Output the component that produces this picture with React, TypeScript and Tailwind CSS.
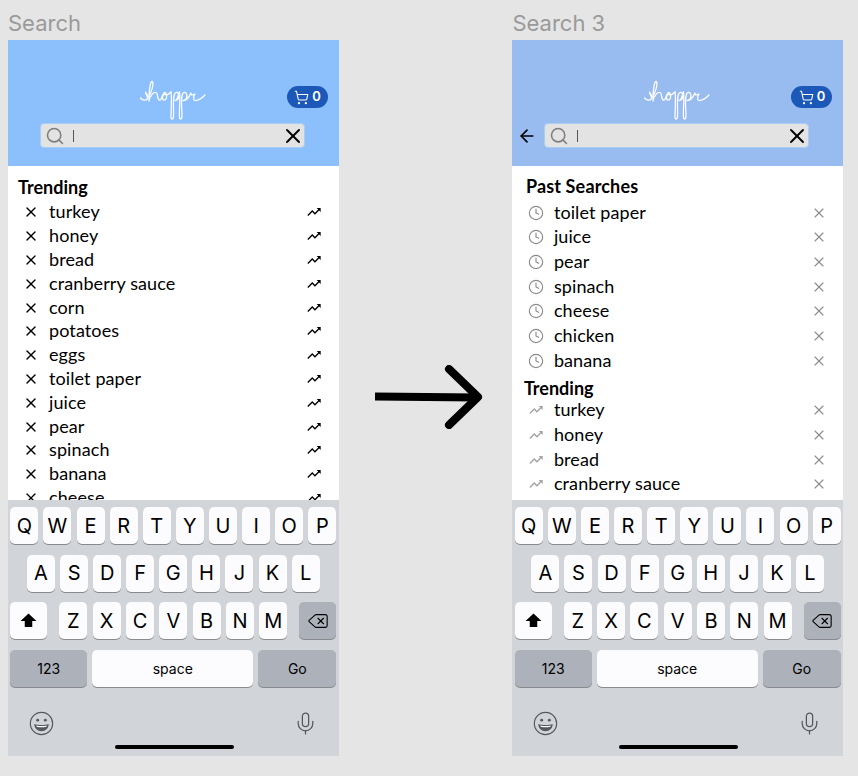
import { ArrowLeft, Clock, Delete, Mic, Search, ShoppingCart, X } from 'lucide-react';

const row1 = ['Q', 'W', 'E', 'R', 'T', 'Y', 'U', 'I', 'O', 'P'];
const row2 = ['A', 'S', 'D', 'F', 'G', 'H', 'J', 'K', 'L'];
const row3 = ['Z', 'X', 'C', 'V', 'B', 'N', 'M'];

const trendingAll = [
  'turkey',
  'honey',
  'bread',
  'cranberry sauce',
  'corn',
  'potatoes',
  'eggs',
  'toilet paper',
  'juice',
  'pear',
  'spinach',
  'banana',
  'cheese',
];
const pastSearches = ['toilet paper', 'juice', 'pear', 'spinach', 'cheese', 'chicken', 'banana'];

function TrendIcon({ className }: { className: string }) {
  return (
    <svg viewBox="0 0 24 24" className={className} fill="currentColor">
      <path d="M16 6l2.29 2.29-4.88 4.88-4-4L2 16.59 3.41 18l6-6 4 4 6.3-6.29L22 12V6z" />
    </svg>
  );
}

function Logo() {
  return (
    <svg viewBox="0 0 67 40" role="img" aria-label="shoppr" className="h-10 w-[67px]" fill="none" stroke="white" strokeWidth="1.25" strokeLinecap="round" strokeLinejoin="round">
      <path d="M0.5 18 C3 21 8 21 7.5 17 C7 15 5.5 14 5.5 12 C7 14 7.5 17 9 16 C11 13 14 5 12.5 1.5 C11 0 9 6 9 21 C10 16 13 12 16 12.5 C19 14 16 20 20 20 C22 20 22 14 24.5 12.5 C27.5 12 27.5 20 24 20 C22 20 22 16 24 14 C26 16 28 15 31 12" />
      <path d="M31 12 C32 18 31 30 31 37 C31 40 33.5 40 33.5 36 C34 28 32 14 36 12.5 C40 12 40 20 35 20.5 C37 21 38 16 39.5 12" />
      <path d="M39.5 12 C40.5 18 39 30 39.5 37 C39.5 40 42 40 42 36 C42 28 40 14 44 12.5 C48 12 48 20 43 20.5 C47 21 49 17 51 13 C51 16 52 15 55 14 C53 17 53 21 56 20.5 C59 20 62 18 65 15" />
    </svg>
  );
}

function Key({ label }: { label: string }) {
  return (
    <div className="flex h-[37px] w-[28px] items-center justify-center rounded-[5px] bg-[#fcfcfe] text-[20px] text-black shadow-[0_1px_0_#898a8d]">
      {label}
    </div>
  );
}

function Keyboard() {
  return (
    <div className="flex h-[256px] flex-col bg-[#d1d4d9] font-['Inter',sans-serif]">
      <div className="flex flex-col gap-[10.5px] pl-[2.3px] pr-[2.3px] pt-[7px]">
        <div className="flex justify-between">
          {row1.map((k) => (
            <Key key={k} label={k} />
          ))}
        </div>
        <div className="flex justify-between px-[16.7px]">
          {row2.map((k) => (
            <Key key={k} label={k} />
          ))}
        </div>
        <div className="flex items-center justify-between">
          <div className="flex h-[37px] w-[37px] items-center justify-center rounded-[5px] bg-[#fcfcfe] shadow-[0_1px_0_#898a8d]">
            <svg viewBox="0 0 18 16" className="h-[15px] w-[17px]" fill="black">
              <path d="M9 0.5 L17.5 8.5 L13 8.5 L13 15 L5 15 L5 8.5 L0.5 8.5 Z" />
            </svg>
          </div>
          <div className="flex w-[228px] justify-between">
            {row3.map((k) => (
              <Key key={k} label={k} />
            ))}
          </div>
          <div className="flex h-[37px] w-[37px] items-center justify-center rounded-[5px] bg-[#acb1ba] text-black shadow-[0_1px_0_#898a8d]">
            <Delete className="h-[22px] w-[22px]" strokeWidth={1.2} />
          </div>
        </div>
        <div className="flex justify-between">
          <div className="flex h-[37px] w-[77px] items-center justify-center rounded-[5px] bg-[#acb1ba] text-[14px] text-black shadow-[0_1px_0_#898a8d]">
            123
          </div>
          <div className="flex h-[37px] w-[161px] items-center justify-center rounded-[5px] bg-[#fcfcfe] text-[14px] text-black shadow-[0_1px_0_#898a8d]">
            space
          </div>
          <div className="flex h-[37px] w-[78px] items-center justify-center rounded-[5px] bg-[#acb1ba] text-[14px] text-black shadow-[0_1px_0_#898a8d]">
            Go
          </div>
        </div>
      </div>
      <div className="flex items-center justify-between pl-[21px] pr-[21px] pt-[24px]">
        <svg viewBox="0 0 26 26" className="h-[25px] w-[25px]" fill="none" stroke="#55585e" strokeWidth="1.2">
          <circle cx="13" cy="13" r="11.6" />
          <circle cx="9" cy="9.5" r="1.5" fill="#55585e" stroke="none" />
          <circle cx="17" cy="9.5" r="1.5" fill="#55585e" stroke="none" />
          <path d="M5.5 13.5 C9 15 17 15 20.5 13.5 C20.5 18 17 21 13 21 C9 21 5.5 18 5.5 13.5 Z" fill="#55585e" stroke="none" />
          <path d="M7.5 15 C10.5 15.8 15.5 15.8 18.5 15 L18 16.5 C15 17.2 11 17.2 8 16.5 Z" fill="white" stroke="none" />
        </svg>
        <Mic className="h-[25px] w-[25px] text-[#55585e]" strokeWidth={1.2} />
      </div>
      <div className="ml-[107px] mt-[9px] h-[4px] w-[119px] rounded-full bg-black" />
    </div>
  );
}

function Header({ tint, back }: { tint: string; back?: boolean }) {
  return (
    <div className={`h-[126px] shrink-0 pt-[40px] ${tint}`}>
      <div className="flex h-[43px] items-start">
        <div className="ml-[132px]">
          <Logo />
        </div>
        <div className="ml-auto mr-[10.5px] mt-[6px] flex h-[22px] w-[41px] items-center justify-center gap-[3px] rounded-full bg-[#1c58b8] text-[13px] font-semibold text-white">
          <ShoppingCart className="h-[15px] w-[15px]" strokeWidth={1.7} />
          <span>0</span>
        </div>
      </div>
      <div className="flex h-[25px] items-center">
        <div className="flex w-[32px] justify-center">
          {back && <ArrowLeft className="ml-[-2px] h-[20px] w-[20px] text-black" strokeWidth={2} />}
        </div>
        <div className="flex h-[25px] w-[265px] items-center rounded-[4px] border border-[#a9cdf5] bg-[#e3e3e3] pl-[4px]">
          <Search className="h-5 w-5 text-[#7f7f7f]" strokeWidth={1.9} />
          <div className="ml-[8px] h-[12px] w-px bg-[#555555]" />
          <X className="ml-auto mr-[-1px] h-6 w-6 text-black" strokeWidth={1.9} />
        </div>
      </div>
    </div>
  );
}

function RowText({ children }: { children: string }) {
  return <span className="ml-[10px] text-[18px] leading-none tracking-[0.1px] text-black">{children}</span>;
}

function SearchOne() {
  return (
    <div className="min-h-0 flex-1 overflow-hidden bg-white pl-[10px] pt-[11px] font-['Lato',sans-serif]">
      <h2 className="h-5 text-[18px] font-bold leading-5 text-black">Trending</h2>
      <ul className="mt-[2.6px]">
        {trendingAll.map((item) => (
          <li key={item} className="flex h-[23.8px] items-center pl-[5px] pr-[17px]">
            <X className="mt-[2px] h-4 w-4 text-black" strokeWidth={2} />
            <RowText>{item}</RowText>
            <TrendIcon className="ml-auto mt-[2px] h-4 w-4 text-black" />
          </li>
        ))}
      </ul>
    </div>
  );
}

function SearchThree() {
  return (
    <div className="min-h-0 flex-1 overflow-hidden bg-white pt-[10px] font-['Lato',sans-serif]">
      <h2 className="ml-[13.5px] h-5 text-[18px] font-bold leading-5 tracking-[0.15px] text-black">Past Searches</h2>
      <ul className="mt-[3.2px]">
        {pastSearches.map((item) => (
          <li key={item} className="flex h-[24.7px] items-center pl-[15.5px] pr-[16px]">
            <Clock className="mt-[2px] h-4 w-4 text-[#8c8c8c]" strokeWidth={1.7} />
            <RowText>{item}</RowText>
            <X className="ml-auto mt-[2px] h-4 w-4 text-[#8c8c8c]" strokeWidth={1.7} />
          </li>
        ))}
      </ul>
      <h2 className="ml-[11.5px] mt-[6px] h-5 text-[18px] font-bold leading-5 text-black">Trending</h2>
      <ul className="-mt-px">
        {trendingAll.slice(0, 4).map((item) => (
          <li key={item} className="flex h-[24.7px] items-center pl-[15.5px] pr-[16px]">
            <TrendIcon className="mt-[2px] h-4 w-4 text-[#a3a3a3]" />
            <RowText>{item}</RowText>
            <X className="ml-auto mt-[2px] h-4 w-4 text-[#8c8c8c]" strokeWidth={1.7} />
          </li>
        ))}
      </ul>
    </div>
  );
}

function Frame({ title, children }: { title: string; children: React.ReactNode }) {
  return (
    <div className="flex w-[330.6px] shrink-0 flex-col">
      <div className="flex h-10 items-center pt-[6px] text-[22px] leading-none text-[#9a9a9a]">{title}</div>
      <div className="flex h-[716px] flex-col overflow-hidden">{children}</div>
    </div>
  );
}

export default function App() {
  return (
    <div className="flex h-[776px] w-[858px] overflow-hidden bg-[#e5e5e5] pl-2 font-['Inter',sans-serif]">
      <Frame title="Search">
        <Header tint="bg-[#8cc0fc]" />
        <SearchOne />
        <Keyboard />
      </Frame>
      <div className="flex w-[173.8px] shrink-0 items-center justify-start pl-[36.4px] pt-[18px]">
        <svg viewBox="0 0 110 64" className="h-[64px] w-[110px]" fill="none" stroke="black" strokeWidth="8">
          <path d="M0 31.5 L102 32.5" />
          <path d="M74 4 L103 32 L74 60" strokeLinecap="round" strokeLinejoin="round" />
        </svg>
      </div>
      <Frame title="Search 3">
        <Header tint="bg-[#98bbf0]" back />
        <SearchThree />
        <Keyboard />
      </Frame>
    </div>
  );
}
